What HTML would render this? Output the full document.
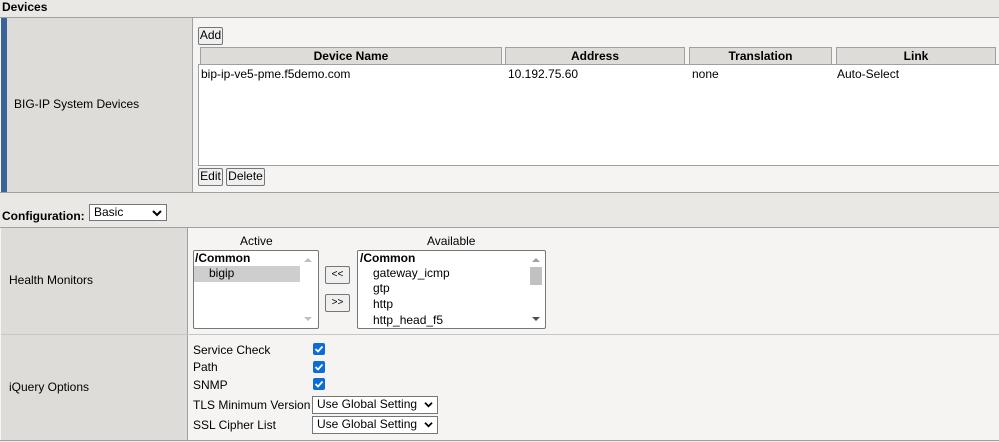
<!DOCTYPE html>
<html><head><meta charset="utf-8"><style>
*{box-sizing:border-box;margin:0;padding:0}
body{width:999px;height:442px;background:#e9e8e5;font-family:"Liberation Sans",Arial,sans-serif;font-size:12px;color:#000;position:relative;overflow:hidden}
.a{position:absolute}
.t{position:absolute;white-space:nowrap;line-height:14px}
.btn{position:absolute;background:#efefef;border:1px solid #767676;border-radius:2px;font-size:12px;text-align:center;line-height:15px}
.hd{position:absolute;top:47px;height:18px;background:#dedcd8;border:1px solid #a0a0a0;border-bottom:none;font-weight:bold;text-align:center;line-height:16px}
.cb{position:absolute;left:313px;width:12px;height:12px;background:#0b6cd8;border-radius:2px}
.cb svg{position:absolute;left:1px;top:1px}
.sel{position:absolute;background:#fff;border:1px solid #767676;font-size:12px;line-height:15px;padding-left:4px}
.chev{position:absolute;right:4px;top:4px}
</style></head><body>
<div class="t" style="left:2px;top:0px;font-weight:bold">Devices</div>
<!-- section 1 -->
<div class="a" style="left:0;top:17px;width:999px;height:176px;border-top:1px solid #a0a0a0;border-bottom:1px solid #a0a0a0;background:#f5f4f2"></div>
<div class="a" style="left:1px;top:18px;width:6px;height:174px;background:#3a6497"></div>
<div class="a" style="left:7px;top:18px;width:186px;height:174px;background:#dedcd8;border-right:1px solid #a0a0a0"></div>
<div class="t" style="left:14px;top:97px">BIG-IP System Devices</div>
<div class="btn" style="left:198px;top:27px;width:25px;height:18px">Add</div>
<div class="hd" style="left:200px;width:302px">Device Name</div>
<div class="hd" style="left:505px;width:180px">Address</div>
<div class="hd" style="left:689px;width:143px">Translation</div>
<div class="hd" style="left:836px;width:160px">Link</div>
<div class="a" style="left:198px;top:64px;width:801px;height:102px;background:#fff;border:1px solid #a0a0a0;border-right:none"></div>
<div class="t" style="left:201px;top:67px">bip-ip-ve5-pme.f5demo.com</div>
<div class="t" style="left:508px;top:67px">10.192.75.60</div>
<div class="t" style="left:692px;top:67px">none</div>
<div class="t" style="left:837px;top:67px">Auto-Select</div>
<div class="btn" style="left:198px;top:168px;width:25px;height:18px">Edit</div>
<div class="btn" style="left:226px;top:168px;width:39px;height:18px">Delete</div>
<!-- config -->
<div class="t" style="left:2px;top:209px;font-weight:bold">Configuration:</div>
<div class="sel" style="left:89px;top:204px;width:78px;height:17px;line-height:14px">Basic<svg class="chev" width="10" height="8" viewBox="0 0 10 8"><path d="M1 2l4 4 4-4" stroke="#000" stroke-width="2" fill="none"/></svg></div>
<!-- section 2 -->
<div class="a" style="left:0;top:227px;width:999px;height:214px;border-top:1px solid #a0a0a0;border-bottom:1px solid #a0a0a0;background:#f5f4f2"></div>
<div class="a" style="left:1px;top:228px;width:187px;height:212px;background:#dedcd8;border-right:1px solid #a0a0a0"></div>
<div class="a" style="left:1px;top:334px;width:998px;height:1px;background:#c8c6c2"></div>
<div class="t" style="left:9px;top:273px">Health Monitors</div>
<div class="t" style="left:9px;top:380px">iQuery Options</div>
<div class="t" style="left:240px;top:234px">Active</div>
<div class="t" style="left:427px;top:234px">Available</div>
<div class="a" style="left:193px;top:250px;width:126px;height:79px;background:#fff;border:1px solid #767676;border-radius:2px"></div>
<div class="a" style="left:194px;top:266px;width:106px;height:16px;background:#cecece"></div>
<div class="t" style="left:195px;top:251px;font-weight:bold">/Common</div>
<div class="t" style="left:209px;top:266px">bigip</div>
<svg class="a" style="left:304px;top:257px" width="8" height="66"><path d="M0 5h8L4 1z" fill="#c0c0c0"/><path d="M0 60h8L4 64z" fill="#c0c0c0"/></svg>
<div class="btn" style="left:325px;top:266px;width:25px;height:18px;font-size:10px;line-height:15px">&lt;&lt;</div>
<div class="btn" style="left:325px;top:294px;width:25px;height:18px;font-size:10px;line-height:15px">&gt;&gt;</div>
<div class="a" style="left:357px;top:250px;width:189px;height:79px;background:#fff;border:1px solid #767676;border-radius:2px"></div>
<div class="t" style="left:360px;top:251px;font-weight:bold">/Common</div>
<div class="t" style="left:373px;top:266px">gateway_icmp</div>
<div class="t" style="left:373px;top:281px">gtp</div>
<div class="t" style="left:373px;top:297px">http</div>
<div class="t" style="left:373px;top:313px">http_head_f5</div>
<svg class="a" style="left:529px;top:257px" width="14" height="66"><path d="M3 5h8L7 1z" fill="#a0a0a0"/><rect x="1" y="10" width="12" height="18" fill="#c1c1c1"/><path d="M3 60h8L7 64z" fill="#505050"/></svg>
<div class="t" style="left:193px;top:343px">Service Check</div>
<div class="t" style="left:193px;top:360px">Path</div>
<div class="t" style="left:193px;top:378px">SNMP</div>
<div class="t" style="left:193px;top:398px">TLS Minimum Version</div>
<div class="t" style="left:193px;top:418px">SSL Cipher List</div>
<div class="cb" style="top:343px"><svg width="10" height="10" viewBox="0 0 10 10"><path d="M1.5 5l2.5 2.5 4.5-5" stroke="#fff" stroke-width="1.8" fill="none"/></svg></div>
<div class="cb" style="top:361px"><svg width="10" height="10" viewBox="0 0 10 10"><path d="M1.5 5l2.5 2.5 4.5-5" stroke="#fff" stroke-width="1.8" fill="none"/></svg></div>
<div class="cb" style="top:378px"><svg width="10" height="10" viewBox="0 0 10 10"><path d="M1.5 5l2.5 2.5 4.5-5" stroke="#fff" stroke-width="1.8" fill="none"/></svg></div>
<div class="sel" style="left:312px;top:396px;width:126px;height:18px">Use Global Setting<svg class="chev" width="9" height="7" viewBox="0 0 10 8"><path d="M1 2l4 4 4-4" stroke="#000" stroke-width="2" fill="none"/></svg></div>
<div class="sel" style="left:312px;top:416px;width:126px;height:18px">Use Global Setting<svg class="chev" width="9" height="7" viewBox="0 0 10 8"><path d="M1 2l4 4 4-4" stroke="#000" stroke-width="2" fill="none"/></svg></div>
</body></html>
